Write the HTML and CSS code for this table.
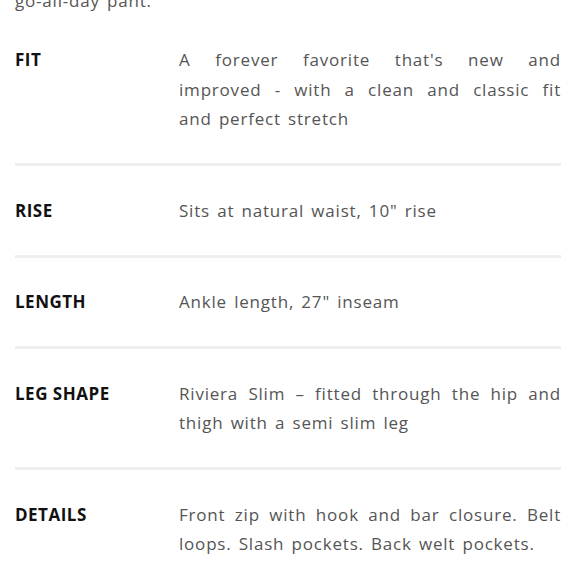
FILE: index.html
```html
<!DOCTYPE html>
<html lang="en">
<head>
<meta charset="utf-8">
<title>Product details</title>
<link rel="stylesheet" href="styles.css">
</head>
<body>
<div class="specs">
  <p class="intro">go-all-day pant.</p>
  <div class="row">
    <div class="label">FIT</div>
    <div class="value">A forever favorite that's new and improved - with a clean and classic fit and&nbsp;perfect stretch</div>
  </div>
  <div class="row">
    <div class="label">RISE</div>
    <div class="value">Sits at natural waist, 10" rise</div>
  </div>
  <div class="row">
    <div class="label">LENGTH</div>
    <div class="value">Ankle length, 27" inseam</div>
  </div>
  <div class="row">
    <div class="label">LEG SHAPE</div>
    <div class="value">Riviera Slim – fitted through the hip and thigh with a semi slim leg</div>
  </div>
  <div class="row last">
    <div class="label">DETAILS</div>
    <div class="value">Front zip with hook and bar closure. Belt loops. Slash pockets. Back welt pockets.</div>
  </div>
</div>
</body>
</html>
```

FILE: styles.css
```css
html, body {
  margin: 0;
  padding: 0;
  background: #ffffff;
}
body {
  font-family: "Open Sans", "DejaVu Sans", sans-serif;
  overflow: hidden;
}
.specs {
  width: 546px;
  padding: 0 15px;
}
.intro {
  margin: -14px 0 0 0;
  font-size: 17px;
  line-height: 29.5px;
  color: #555555;
  letter-spacing: 0.8px;
  word-spacing: 2px;
}
.row {
  display: grid;
  grid-template-columns: 164px 1fr;
  padding: 29.5px 0;
  border-bottom: 3px solid #eeeeee;
}
.row.last {
  border-bottom: none;
}
.label {
  font-size: 17px;
  line-height: 29.5px;
  font-weight: 700;
  color: #111111;
  letter-spacing: 0.5px;
}
.value {
  font-size: 17px;
  line-height: 29.5px;
  color: #555555;
  text-align: justify;
  letter-spacing: 0.8px;
  word-spacing: 2px;
}
```
